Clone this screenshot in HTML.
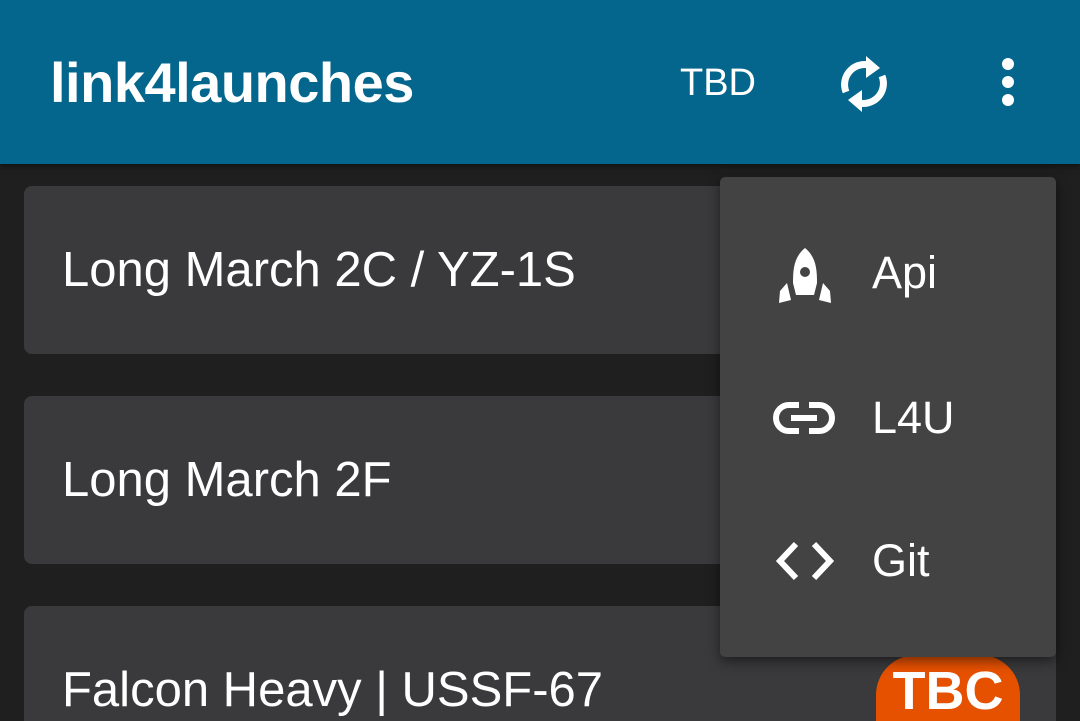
<!DOCTYPE html>
<html><head><meta charset="utf-8"><style>
*{margin:0;padding:0;box-sizing:border-box}
html,body{width:1080px;height:721px;overflow:hidden}
body{background:#1f1f20;font-family:"Liberation Sans",sans-serif;position:relative;color:#fff}
.bar{position:absolute;left:0;top:0;width:1080px;height:164px;background:#05668d;box-shadow:0 2px 6px rgba(0,0,0,.5)}
.title{position:absolute;left:50px;top:50px;font-size:56px;font-weight:bold;letter-spacing:-0.5px}
.tbd{position:absolute;left:680px;top:62px;font-size:38px}
.card{position:absolute;left:24px;width:1032px;height:168px;background:#3a3a3c;border-radius:8px}
.card span{position:absolute;left:38px;top:56px;font-size:49px;white-space:nowrap}
.menu{position:absolute;left:720px;top:177px;width:336px;height:480px;background:#434343;border-radius:5px;box-shadow:0 4px 12px rgba(0,0,0,.5)}
.item{position:absolute;left:152px;font-size:45px}
.badge{position:absolute;left:876px;top:655px;width:144px;height:66px;border-radius:40px 40px 0 0;background:#e65100;font-weight:bold;font-size:54px;text-align:center;line-height:72px;overflow:hidden}
</style></head><body>
<div class="bar"></div>
<div class="title">link4launches</div>
<div class="tbd">TBD</div>
<svg style="position:absolute;left:836px;top:54px" width="56" height="60" viewBox="0 0 56 60">
<path d="M10 38 A20 20 0 0 1 36 12" fill="none" stroke="#fff" stroke-width="7"/>
<path d="M30 2 L44 14 L30 24 Z" fill="#fff"/>
<path d="M46 22 A20 20 0 0 1 20 48" fill="none" stroke="#fff" stroke-width="7"/>
<path d="M26 58 L12 46 L26 36 Z" fill="#fff"/>
</svg>
<svg style="position:absolute;left:996px;top:56px" width="24" height="52"><circle cx="12" cy="8" r="6" fill="#fff"/><circle cx="12" cy="26" r="6" fill="#fff"/><circle cx="12" cy="44" r="6" fill="#fff"/></svg>
<div class="card" style="top:186px"><span>Long March 2C / YZ-1S</span></div>
<div class="card" style="top:396px"><span>Long March 2F</span></div>
<div class="card" style="top:606px;height:115px;border-radius:8px 8px 0 0;overflow:hidden"><span>Falcon Heavy | USSF-67</span></div>
<div class="badge">TBC</div>
<div class="menu">
<svg style="position:absolute;left:58px;top:70px" width="54" height="58" viewBox="0 0 54 58">
<path d="M27 1 C16 10 15 22 15 36 L18 48 L36 48 L39 36 C39 22 38 10 27 1 Z" fill="#fff"/>
<circle cx="27" cy="25" r="5" fill="#434343"/>
<path d="M9 36 L2 44 L1 56 L13 53 Z" fill="#fff"/><path d="M45 36 L52 44 L53 56 L41 53 Z" fill="#fff"/>
</svg>
<div class="item" style="top:70px">Api</div>
<svg style="position:absolute;left:53px;top:224px" width="62" height="34" viewBox="0 0 62 34">
<path d="M26 4 H16 A13 13 0 0 0 16 30 H26 M36 4 H46 A13 13 0 0 1 46 30 H36" fill="none" stroke="#fff" stroke-width="6"/>
<rect x="18" y="14" width="26" height="6" fill="#fff"/>
</svg>
<div class="item" style="top:215px">L4U</div>
<svg style="position:absolute;left:54px;top:364px" width="62" height="40" viewBox="0 0 62 40">
<path d="M22 3 L6 20 L22 37 M40 3 L56 20 L40 37" fill="none" stroke="#fff" stroke-width="6"/>
</svg>
<div class="item" style="top:358px">Git</div>
</div>
</body></html>
